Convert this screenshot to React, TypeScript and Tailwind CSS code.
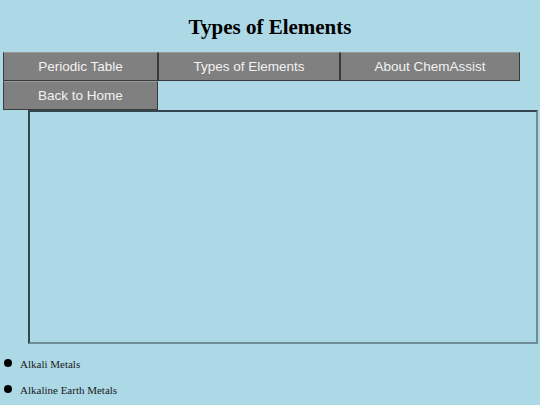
export default function App() {
  const tabs = [
    { label: "Periodic Table", w: "w-[155px]" },
    { label: "Types of Elements", w: "w-[182px]" },
    { label: "About ChemAssist", w: "w-[180px]" },
    { label: "Back to Home", w: "w-[155px]" },
  ];
  const items = ["Alkali Metals", "Alkaline Earth Metals"];

  return (
    <div className="w-[540px] h-[405px] overflow-hidden bg-[#add8e6]">
      <h1 className="pt-[13px] h-[52px] text-center text-[21px] font-bold leading-[28px] text-black font-['Liberation_Serif',serif]">
        Types of Elements
      </h1>

      <div className="flex flex-wrap pl-[3px] pr-[20px]">
        {tabs.map((t) => (
          <button
            key={t.label}
            className={`${t.w} h-[29px] bg-[#808080] border border-[#3a3a3a] border-t-[#9a9a9a] text-[13.5px] text-[#f2f2f2] font-['Liberation_Sans',Arial,sans-serif] leading-none`}
          >
            {t.label}
          </button>
        ))}
      </div>

      <div className="ml-[28px] mr-[2px] h-[234px] border-2 border-t-[#34474e] border-l-[#34474e] border-b-[#6e8d99] border-r-[#6e8d99]" />

      <ul className="pt-[6px] font-['Liberation_Serif',serif] text-[11px] text-[#1a1a1a]">
        {items.map((it) => (
          <li key={it} className="flex items-center h-[26px]">
            <span className="ml-[4px] w-[8px] h-[8px] rounded-full bg-black shrink-0" />
            <span className="ml-[8px] mt-[2px]">{it}</span>
          </li>
        ))}
      </ul>
    </div>
  );
}
